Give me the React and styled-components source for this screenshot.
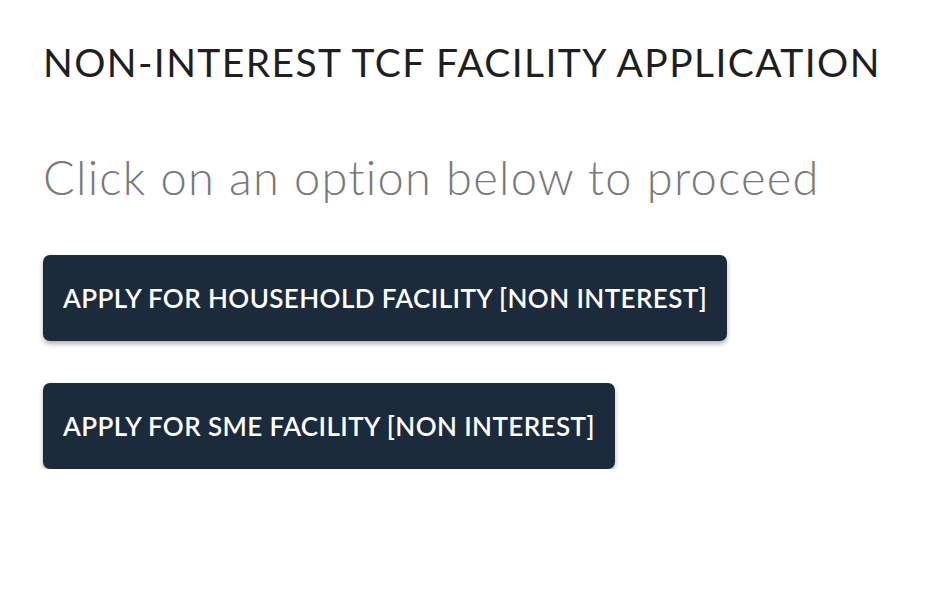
import React from "react";
import styled, { createGlobalStyle } from "styled-components";

const Global = createGlobalStyle`
  html, body { margin: 0; padding: 0; background: #fff; }
  body { font-family: Lato, "Noto Sans", sans-serif; }
`;

const Page = styled.main`
  padding: 36px 43px 0 43px;
  display: flex;
  flex-direction: column;
  align-items: flex-start;
`;

const Title = styled.h1`
  margin: 0;
  font-family: Lato, sans-serif;
  font-weight: 400;
  font-size: 39px;
  line-height: 52px;
  color: #1f1f1f;
  letter-spacing: 1.4px;
`;

const Subtitle = styled.p`
  margin: 59px 0 0 0;
  font-family: Lato, sans-serif;
  font-weight: 300;
  font-size: 47px;
  line-height: 60px;
  color: #7a7a7a;
  letter-spacing: 1.25px;
`;

const Options = styled.div`
  margin-top: 48px;
  display: flex;
  flex-direction: column;
  align-items: flex-start;
  gap: 42px;
`;

const OptionButton = styled.button`
  height: 86px;
  padding: 0 20px;
  border: none;
  border-radius: 7px;
  background: #1c2b3c;
  color: #fff;
  font-family: Lato, sans-serif;
  font-weight: 600;
  font-size: 26px;
  letter-spacing: 0.4px;
  box-shadow: 0 3px 5px rgba(0, 0, 0, 0.3);
  cursor: pointer;
`;

export default function App() {
  return (
    <>
      <Global />
      <Page>
        <Title>NON-INTEREST TCF FACILITY APPLICATION</Title>
        <Subtitle>Click on an option below to proceed</Subtitle>
        <Options>
          <OptionButton>APPLY FOR HOUSEHOLD FACILITY [NON INTEREST]</OptionButton>
          <OptionButton>APPLY FOR SME FACILITY [NON INTEREST]</OptionButton>
        </Options>
      </Page>
    </>
  );
}
